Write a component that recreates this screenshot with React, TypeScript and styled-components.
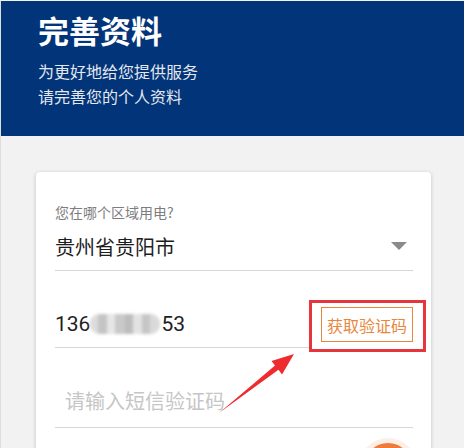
import styled, { createGlobalStyle } from 'styled-components';

const GlobalStyle = createGlobalStyle`
  html, body {
    margin: 0;
    padding: 0;
    background: #f2f2f2;
    font-family: Roboto, "Noto Sans CJK SC", sans-serif;
  }
`;

const Page = styled.div`
  position: relative;
  width: 464px;
  height: 448px;
  overflow: hidden;
  background: #f2f2f2;
  border-top: 1px solid #f4f4f4;
  border-left: 1px solid #dedede;
  box-sizing: border-box;
`;

const Header = styled.header`
  height: 135px;
  background: #023479;
  padding: 9px 0 0 37px;
  box-sizing: border-box;
  color: #fff;
`;

const Title = styled.h1`
  margin: 0;
  font-family: "Noto Sans CJK SC", sans-serif;
  font-size: 31px;
  line-height: 40px;
  font-weight: 700;
`;

const Subtitle = styled.p`
  margin: 9px 0 0;
  font-family: "Noto Sans CJK SC", sans-serif;
  font-size: 16px;
  line-height: 25px;
  color: #e4e8f0;
`;

const Card = styled.section`
  position: relative;
  margin: 36px 33px 0 35px;
  min-height: 340px;
  background: #fff;
  border-radius: 4px;
  box-shadow: 0 1px 4px rgba(0, 0, 0, 0.2);
  padding: 30px 18px 0 19px;
  box-sizing: border-box;
`;

const Label = styled.div`
  font-family: "Noto Sans CJK SC", sans-serif;
  font-size: 14px;
  line-height: 20px;
  color: #7d7d7d;
`;

const Field = styled.div<{ $pad?: number }>`
  display: flex;
  align-items: center;
  justify-content: space-between;
  border-bottom: 1px solid #d6d6d6;
  padding-left: ${(p) => p.$pad ?? 0}px;
`;

const SelectField = styled(Field)`
  height: 48px;
`;

const Value = styled.span`
  font-family: Roboto, "Noto Sans CJK SC", sans-serif;
  font-size: 20px;
  color: #1e1e1e;
  display: flex;
  align-items: center;
`;

const Caret = styled.span`
  width: 0;
  height: 0;
  margin-right: 6px;
  border-left: 8px solid transparent;
  border-right: 8px solid transparent;
  border-top: 8px solid #8a8a8a;
`;

const PhoneRow = styled.div`
  display: flex;
  align-items: flex-end;
`;

const PhoneField = styled(Field)`
  flex: 1;
  height: 77px;
  padding-top: 30px;
  box-sizing: border-box;
  align-items: center;
`;

const Phone = styled(Value)`
  font-size: 21px;
`;

const Masked = styled.span`
  display: inline-block;
  width: 70px;
  height: 20px;
  margin: 0 1px 0 0;
  border-radius: 9px;
  background:
    linear-gradient(90deg, #dcdcdc 0 12%, #c4c4c4 12% 24%, #e6e6e6 24% 36%, #c9c9c9 36% 50%, #bdbdbd 50% 62%, #e2e2e2 62% 74%, #c6c6c6 74% 86%, #dadada 86%);
  filter: blur(1.5px);
`;

const Highlight = styled.div`
  border: 3px solid #e5353d;
  padding: 4px 10px 7px 9px;
  margin: 0 -13px -4px 0;
`;

const CodeButton = styled.button`
  width: 92px;
  height: 35px;
  padding: 0;
  border: 1px solid #e9863e;
  background: #fff;
  color: #e9863e;
  font-family: "Noto Sans CJK SC", sans-serif;
  font-size: 16px;
`;

const CodeField = styled(Field)`
  height: 80px;
  padding-top: 26px;
  box-sizing: border-box;
`;

const Placeholder = styled.span`
  font-family: "Noto Sans CJK SC", sans-serif;
  font-size: 20px;
  color: #c6c6c6;
`;

const Fab = styled.div`
  position: absolute;
  left: 328px;
  top: 271px;
  width: 48px;
  height: 48px;
  border-radius: 50%;
  background: #ef7a3c;
  box-shadow: 0 0 0 5px rgba(239, 122, 60, 0.12);
`;

const Annotation = styled.svg`
  position: absolute;
  left: 0;
  top: 0;
  pointer-events: none;
`;

export default function App() {
  return (
    <>
      <GlobalStyle />
      <Page>
        <Header>
          <Title>完善资料</Title>
          <Subtitle>
            为更好地给您提供服务
            <br />
            请完善您的个人资料
          </Subtitle>
        </Header>
        <Card>
          <Label>您在哪个区域用电?</Label>
          <SelectField>
            <Value>贵州省贵阳市</Value>
            <Caret />
          </SelectField>
          <PhoneRow>
            <PhoneField>
              <Phone>
                136
                <Masked />
                53
              </Phone>
            </PhoneField>
            <Highlight>
              <CodeButton>获取验证码</CodeButton>
            </Highlight>
          </PhoneRow>
          <CodeField $pad={10}>
            <Placeholder>请输入短信验证码</Placeholder>
          </CodeField>
          <Fab />
        </Card>
        <Annotation width="464" height="448" viewBox="0 0 464 448">
          <polygon
            points="218,412 277.5,368.8 281,373.5 293,353 270.5,360 274,364.4"
            fill="#ee2b2f"
          />
        </Annotation>
      </Page>
    </>
  );
}
